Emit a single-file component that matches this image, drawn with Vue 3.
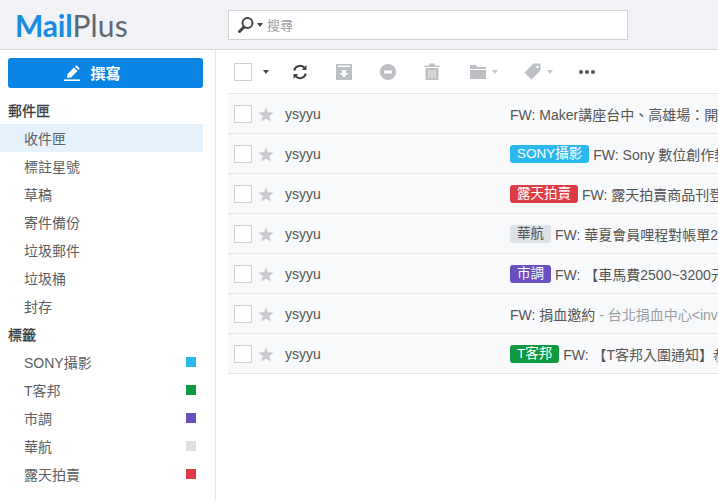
<script setup>
const folders = ['收件匣', '標註星號', '草稿', '寄件備份', '垃圾郵件', '垃圾桶', '封存']
const labels = [
  { name: 'SONY攝影', color: '#2bb8ee' },
  { name: 'T客邦', color: '#0e9a3e' },
  { name: '市調', color: '#6a4fc0' },
  { name: '華航', color: '#dde1e6' },
  { name: '露天拍賣', color: '#de3b45' },
]
const rows = [
  { subject: 'FW: Maker講座台中、高雄場：開' },
  { tag: 'SONY攝影', color: '#2bb8ee', subject: 'FW: Sony 數位創作教' },
  { tag: '露天拍賣', color: '#de3b45', subject: 'FW: 露天拍賣商品刊登' },
  { tag: '華航', color: '#dde1e6', dark: true, subject: 'FW: 華夏會員哩程對帳單2' },
  { tag: '市調', color: '#6a4fc0', subject: 'FW: 【車馬費2500~3200元' },
  { subject: 'FW: 捐血邀約', extra: ' - 台北捐血中心<invm' },
  { tag: 'T客邦', color: '#0e9a3e', subject: 'FW: 【T客邦入圍通知】恭' },
]
</script>

<template>
  <div class="app">
    <header class="top">
      <div class="logo"><span class="mail">Mail</span><span class="plus">Plus</span></div>
      <div class="search">
        <svg class="lens" width="18" height="18" viewBox="0 0 18 18">
          <circle cx="10.5" cy="7" r="5" fill="none" stroke="#444" stroke-width="2" />
          <path d="M7 11 L2.5 15.5" stroke="#444" stroke-width="3" stroke-linecap="round" />
        </svg>
        <span class="caret dark"></span>
        <span class="placeholder">搜尋</span>
      </div>
    </header>
    <div class="body">
      <aside class="side">
        <button class="compose">
          <svg width="16" height="16" viewBox="0 0 16 16">
            <path d="M3.5 9 L10 2.5 L13.5 6 L7 12.5 L3 13 Z M11 1.5 L12 0.6 Q12.6 0.2 13.1 0.7 L15.3 2.9 Q15.8 3.4 15.3 4 L14.5 5 Z" fill="#fff" />
            <rect x="0" y="14.4" width="16" height="1.6" fill="#fff" />
          </svg>
          <span>撰寫</span>
        </button>
        <h3 class="head first"><span>郵件匣</span></h3>
        <div v-for="(f, i) in folders" :key="f" class="item" :class="{ active: i === 0 }"><span class="lbl">{{ f }}</span></div>
        <h3 class="head"><span>標籤</span></h3>
        <div v-for="l in labels" :key="l.name" class="item">
          <span class="lbl">{{ l.name }}</span>
          <i class="dot" :style="{ background: l.color }"></i>
        </div>
      </aside>
      <main class="content">
        <div class="toolbar">
          <span class="check"></span>
          <span class="caret dark tc"></span>
          <svg class="t-refresh" width="16" height="16" viewBox="0 0 16 16" fill="none" stroke="#444" stroke-width="2">
            <path d="M2.2 6.5 A6 6 0 0 1 12.6 4" />
            <path d="M13.8 9.5 A6 6 0 0 1 3.4 12" />
            <path d="M14.5 1 V6 H9.8 Z M1.5 15 V10 H6.2 Z" fill="#444" stroke="none" />
          </svg>
          <svg class="t-archive" width="16" height="16" viewBox="0 0 16 16">
            <path d="M0 0 H16 V16 H0 Z M2 1.5 V3 H14 V1.5 Z" fill="#bcbfc3" fill-rule="evenodd" />
            <path d="M6 6 H10 V9 H12.5 L8 13.5 L3.5 9 H6 Z" fill="#fff" />
          </svg>
          <svg class="t-block" width="16" height="16" viewBox="0 0 16 16">
            <circle cx="8" cy="8" r="8" fill="#bcbfc3" />
            <rect x="4" y="6.5" width="8" height="3" fill="#fff" />
          </svg>
          <svg class="t-trash" width="16" height="17" viewBox="0 0 16 17">
            <path d="M0.5 2.5 H5.5 V0.5 H10.5 V2.5 H15.5 V4 H0.5 Z" fill="#bcbfc3" />
            <path d="M1.5 5 H14.5 V17 H1.5 Z" fill="#bcbfc3" />
            <path d="M5 7 V15 M8 7 V15 M11 7 V15" stroke="#fff" stroke-width="1" />
          </svg>
          <svg class="t-folder" width="16" height="14" viewBox="0 0 16 14">
            <path d="M0 0 H6 L7.5 2 H16 V4 H0 Z M0 5 H16 V14 H0 Z" fill="#bcbfc3" />
          </svg>
          <span class="caret light tf"></span>
          <svg class="t-tag" width="17" height="17" viewBox="0 0 17 17">
            <path fill-rule="evenodd" d="M9.5 0.5 H16.5 V7.5 L7.5 16.5 L0.5 9.5 Z M13.5 2.5 A1.3 1.3 0 1 0 13.51 2.5 Z" fill="#bcbfc3" />
          </svg>
          <span class="caret light tt"></span>
          <span class="more"><i></i><i></i><i></i></span>
        </div>
        <div v-for="(r, i) in rows" :key="i" class="row">
          <span class="check"></span>
          <svg class="star" width="16" height="15" viewBox="0 0 16 15">
            <path d="M8 0 L10 5.3 L15.7 5.6 L11.2 9.1 L12.8 14.7 L8 11.5 L3.2 14.7 L4.8 9.1 L0.3 5.6 L6 5.3 Z" fill="#c9cbce" />
          </svg>
          <span class="sender">ysyyu</span>
          <span class="subject">
            <span v-if="r.tag" class="tag" :class="{ dark: r.dark }" :style="{ background: r.color }">{{ r.tag }}</span>
            <span class="stext">{{ r.subject }}</span><span v-if="r.extra" class="extra">{{ r.extra }}</span>
          </span>
        </div>
      </main>
    </div>
  </div>
</template>

<style>
html, body { margin: 0; background: #fff; overflow: hidden; }
</style>

<style scoped>
.app {
  width: 718px;
  height: 500px;
  overflow: hidden;
  display: flex;
  flex-direction: column;
  font-family: "Liberation Sans", "Noto Sans CJK TC", sans-serif;
  font-size: 14px;
  color: #555;
}
.top {
  height: 49px;
  flex: none;
  background: #f0f2f5;
  border-bottom: 1px solid #d4d6d9;
  display: flex;
  align-items: center;
}
.logo {
  width: 228px;
  padding-left: 15px;
  box-sizing: border-box;
  font-family: "Lato", sans-serif;
  font-size: 30px;
  line-height: 36px;
}
.mail { color: #1a8be0; font-weight: 700; letter-spacing: -0.2px; }
.plus { color: #5f6872; font-weight: 400; letter-spacing: 0.2px; }
.search {
  width: 400px;
  height: 30px;
  box-sizing: border-box;
  background: #fff;
  border: 1px solid #cfd2d6;
  display: flex;
  align-items: center;
  padding-left: 8px;
}
.placeholder { color: #9a9da1; font-size: 13px; margin-left: 4px; }
.caret {
  display: inline-block;
  width: 0;
  height: 0;
  border-left: 3.5px solid transparent;
  border-right: 3.5px solid transparent;
  border-top: 4px solid #444;
}
.caret.light { border-top-color: #c6c8cb; }
.search .caret { margin-left: 2px; }
.body { flex: 1; display: flex; min-height: 0; }
.side {
  width: 216px;
  flex: none;
  box-sizing: border-box;
  border-right: 1px solid #e4e6e8;
  padding: 8px 12px 0 0;
}
.compose {
  display: flex;
  align-items: center;
  justify-content: center;
  gap: 10px;
  width: 195px;
  height: 30px;
  margin-left: 8px;
  padding: 0 26px 1px 0;
  border: 0;
  border-radius: 3px;
  background: #0a84e4;
  color: #fff;
  font: 700 15px "Liberation Sans", "Noto Sans CJK TC", sans-serif;
}
.head {
  margin: 0;
  box-sizing: border-box;
  height: 28px;
  line-height: 28px;
  padding: 1px 0 0 8px;
  font-size: 14px;
  font-weight: 400;
  color: #33383e;
  -webkit-text-stroke: 0.3px #33383e;
}
.head.first { margin-top: 8px; }
.item {
  height: 28px;
  padding: 0 7px 0 24px;
  display: flex;
  justify-content: space-between;
  align-items: center;
  color: #5a5f65;
}
.lbl { line-height: 28px; padding-top: 1px; height: 27px; }
.item.active { background: #e6f2fb; }
.dot { width: 10px; height: 10px; }
.content { flex: 1; padding-left: 12px; min-width: 0; }
.toolbar {
  height: 43px;
  display: flex;
  align-items: center;
  padding-left: 6px;
  border-bottom: 1px solid #e4e6e8;
}
.check {
  width: 16px;
  height: 16px;
  flex: none;
  background: #fff;
  border: 1px solid #cdd0d3;
}
.row .check { margin-top: 1px; }
.tc { margin-left: 11px; }
.t-refresh { margin-left: 23px; }
.t-archive { margin-left: 28px; }
.t-block { margin-left: 28px; }
.t-trash { margin-left: 28px; }
.t-folder { margin-left: 30px; }
.tf { margin-left: 6px; }
.t-tag { margin-left: 26px; }
.tt { margin-left: 6px; }
.more { margin-left: 26px; display: flex; gap: 2px; }
.more i { width: 4px; height: 4px; border-radius: 50%; background: #555; }
.row {
  height: 39px;
  display: flex;
  align-items: center;
  padding-left: 6px;
  background: #f8f9fb;
  border-bottom: 1px solid #e4e6e8;
  overflow: hidden;
  white-space: nowrap;
}
.star { margin: 2px 0 0 6px; flex: none; }
.sender { width: 225px; margin-left: 11px; flex: none; color: #555; }
.subject { display: flex; align-items: center; flex: none; color: #555; }
.tag {
  height: 18px;
  line-height: 18px;
  padding: 0 7px;
  margin-right: 4px;
  border-radius: 3px;
  font-size: 13.5px;
  color: #fff;
}
.tag.dark { color: #555; }
.extra { color: #9a9ea3; white-space: pre; }
</style>
